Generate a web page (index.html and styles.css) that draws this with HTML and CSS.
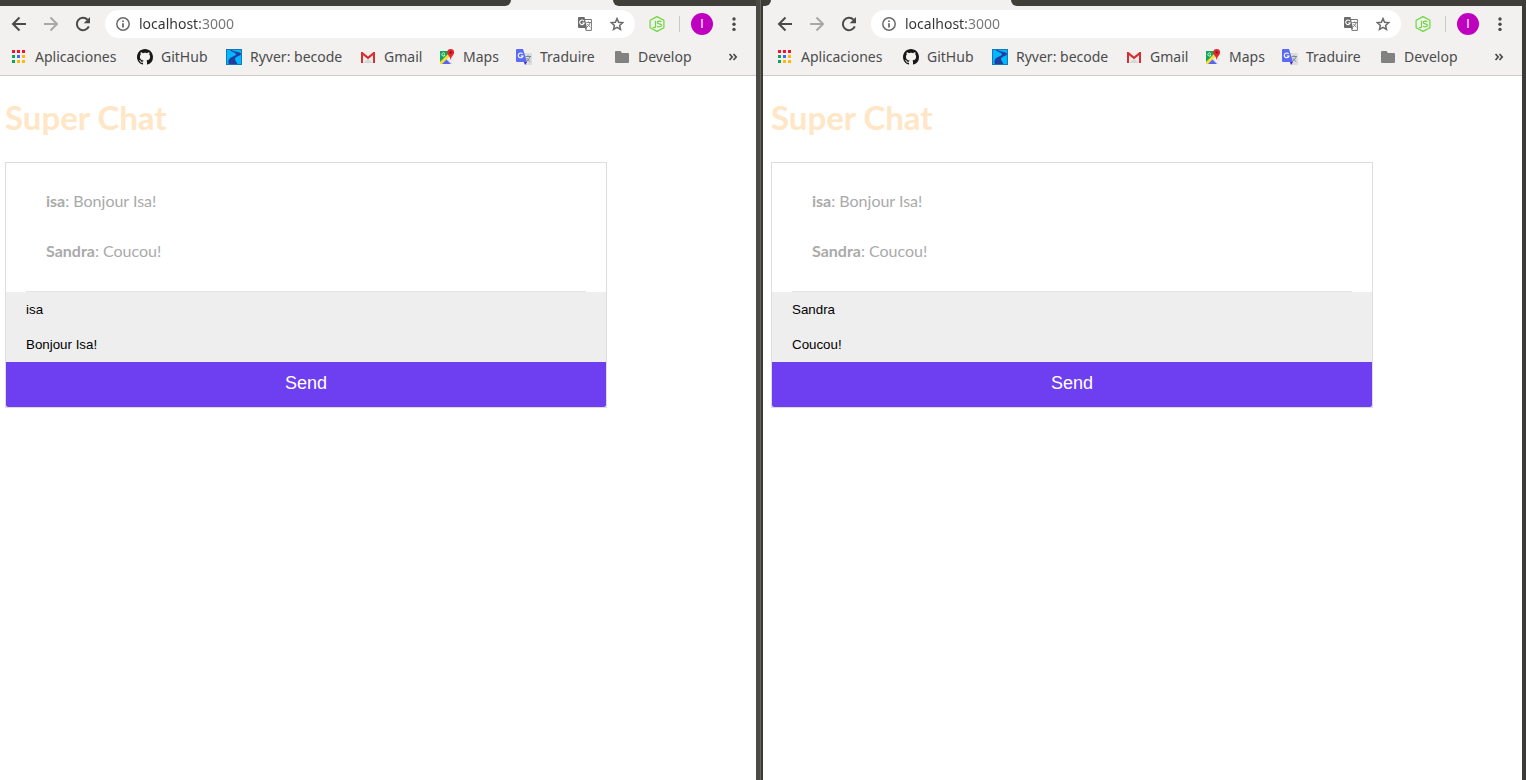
FILE: index.html
```html
<!DOCTYPE html>
<html lang="fr">
<head>
<meta charset="utf-8">
<title>Super Chat</title>
<link rel="stylesheet" href="styles.css">
</head>
<body>
<svg class="sprite" aria-hidden="true">
  <symbol id="back" viewBox="0 0 16 16"><path d="M15 8H2.500M8.500 1.500 2 8l6.500 6.500" fill="none" stroke="currentColor" stroke-width="2"/></symbol>
  <symbol id="forward" viewBox="0 0 16 16"><path d="M1 8h12.500M7.500 1.500 14 8l-6.500 6.500" fill="none" stroke="currentColor" stroke-width="2"/></symbol>
  <symbol id="reload" viewBox="0 0 16 16"><path d="M13.800 10.300A6.200 6.200 0 1 1 12.600 3.800" fill="none" stroke="currentColor" stroke-width="2"/><path d="M15 1v6.300H8.700z" fill="currentColor"/></symbol>
  <symbol id="info" viewBox="0 0 14 14"><circle cx="7" cy="7" r="6.200" fill="none" stroke="currentColor" stroke-width="1.500"/><path d="M6.100 6.200h1.800v4.300H6.100zM6.100 3.500h1.800V5H6.100z" fill="currentColor"/></symbol>
  <symbol id="translate" viewBox="0 0 14 14"><path d="M6 2.500h7.400v10.900H8" fill="#fff" stroke="#757575"/><path d="M1 0h5.500L9 11H1a1 1 0 0 1-1-1V1a1 1 0 0 1 1-1z" fill="#6b6b6b"/><path d="M7 11h2l-1.200 3z" fill="#6b6b6b"/><path d="M8.300 5.500H13M10.500 4.500v1M12 5.500c-.3 2-1.500 3.500-3 4.300M9.200 6.800l3 3.400" fill="none" stroke="#757575" stroke-width=".9"/><path d="M6 4.100A2.300 2.300 0 1 0 6.200 6H4.300" fill="none" stroke="#fff" stroke-width="1.100"/></symbol>
  <symbol id="star" viewBox="0 0 14 14"><path d="M7 1.600 8.600 5.300l4 .4-3 2.700.9 4L7 10.300l-3.500 2.100.9-4-3-2.700 4-.4z" fill="none" stroke="currentColor" stroke-width="1.500"/></symbol>
  <symbol id="node" viewBox="0 0 16 16"><path d="M8 .6 14.900 4.300v7.400L8 15.400l-6.900-3.700V4.300z" fill="none" stroke="#6cd83c" stroke-width="1.200" stroke-linejoin="round"/><path d="M6.500 4.800v5.600c0 1.300-1 1.500-2.700.8M12.300 5.700c-1-.8-4-.8-4 .8 0 1.800 4.200.8 4.200 2.900 0 1.700-3.500 1.700-4.500.7" fill="none" stroke="#6cd83c" stroke-width="1.200"/></symbol>
  <symbol id="dots" viewBox="0 0 4 16"><g fill="currentColor"><circle cx="2" cy="3" r="1.700"/><circle cx="2" cy="8.200" r="1.700"/><circle cx="2" cy="13.400" r="1.700"/></g></symbol>
  <symbol id="apps" viewBox="0 0 16 16"><path d="M1 1h3v3H1zM6 1h3v3H6zM11 1h3v3h-3z" fill="#f8102c"/><path d="M1 6h3v3H1zM1 11h3v3H1z" fill="#0ba853"/><path d="M6 6h3v3H6z" fill="#3d6df5"/><path d="M11 6h3v3h-3zM6 11h3v3H6zM11 11h3v3h-3z" fill="#fdb80a"/></symbol>
  <symbol id="github" viewBox="0 0 16 16"><path fill="#181617" d="M8 0C3.580 0 0 3.580 0 8c0 3.540 2.290 6.530 5.470 7.590.4.070.55-.17.55-.38 0-.19-.01-.82-.01-1.490-2.010.37-2.530-.49-2.690-.94-.09-.23-.48-.94-.82-1.130-.28-.15-.68-.52-.01-.53.63-.01 1.080.58 1.230.82.72 1.210 1.870.87 2.330.66.07-.52.28-.87.51-1.070-1.780-.2-3.640-.89-3.640-3.950 0-.87.31-1.590.82-2.150-.08-.2-.36-1.020.08-2.120 0 0 .67-.21 2.200.82.64-.18 1.320-.27 2-.27s1.360.09 2 .27c1.530-1.040 2.200-.82 2.200-.82.44 1.100.16 1.920.08 2.120.51.56.82 1.270.82 2.150 0 3.070-1.870 3.750-3.650 3.950.29.25.54.73.54 1.480 0 1.070-.01 1.930-.01 2.200 0 .21.15.46.55.38A8.010 8.010 0 0 0 16 8c0-4.420-3.580-8-8-8z"/></symbol>
  <symbol id="ryver" viewBox="0 0 16 16"><rect x=".5" y=".5" width="15" height="15" fill="#00b8ff" stroke="#1576b8"/><path d="M4 1h2c1 2 9 1.500 9 4 0 2-6 2.500-6 5 0 2 2 3 2.500 5H3c-1.500-3 0-5.500 3-7s5-2 3.500-3.500S4.500 2.500 4 1z" fill="#203e9e"/></symbol>
  <symbol id="gmail" viewBox="0 0 16 16"><path d="M1 3h14v11H1z" fill="#efefef"/><path d="m3 14 5-4 5 4z" fill="#d7d7d7"/><path d="M1 3h1.500L8 7.500 13.500 3H15v11h-2V6.200l-5 4-5-4V14H1z" fill="#da2d2d"/></symbol>
  <symbol id="maps" viewBox="0 0 16 16"><path d="M1 2h13v13H1z" fill="#e6e6e6"/><path d="M1 2h9l1 4-9.500 9H1z" fill="#13a65a"/><path d="m1 13 8.500-8.500 2 2L3 15H1z" fill="#ffdd2e"/><path d="m3 15 4.500-4.500L12 15z" fill="#5664ef"/><path d="m9 8.800 5.500 5.500" stroke="#fff" stroke-width="1"/><path d="M5.800 4.700A1.600 1.600 0 1 0 6 6H4.600" fill="none" stroke="#fff" stroke-width=".8"/><path d="M11.700 0a3.400 3.400 0 0 1 3.400 3.400c0 2.500-2.900 3.600-3.200 7.100h-.4c-.3-3.500-3.200-4.600-3.200-7.100A3.400 3.400 0 0 1 11.700 0z" fill="#e9262f"/><circle cx="11.700" cy="3.400" r="1.200" fill="#7e1620"/></symbol>
  <symbol id="gtrans" viewBox="0 0 16 16"><path d="M6 4h9a1 1 0 0 1 1 1v10a1 1 0 0 1-1 1H9z" fill="#dcdcdc"/><path d="M1 0h6l4 13H1a1 1 0 0 1-1-1V1a1 1 0 0 1 1-1z" fill="#5b6cf4"/><path d="M8 13h3l-2 3z" fill="#4a19c9"/><path d="M6.600 4.900A2.400 2.400 0 1 0 7 7H4.700" fill="none" stroke="#fff" stroke-width="1.100"/><path d="M9.500 7.500H15M12 6.300v1.200M14 7.500c-.4 2-1.600 3.500-3.200 4.500M10.500 9l3.500 3.800" fill="none" stroke="#6f8290" stroke-width=".9"/></symbol>
  <symbol id="folder" viewBox="0 0 16 16"><path d="M2 2h4.500L8 4h6a1 1 0 0 1 1 1v8a1 1 0 0 1-1 1H2a1 1 0 0 1-1-1V3a1 1 0 0 1 1-1z" fill="#818181"/></symbol>
  <symbol id="more" viewBox="0 0 10 10"><path d="m1.500 2 2.700 3-2.700 3M5.500 2l2.700 3-2.700 3" fill="none" stroke="currentColor" stroke-width="1.700"/></symbol>
</svg>
<div class="desktop">
  <section class="window window-left" aria-label="isa">
    <div class="tabs"><span class="tabs-before"></span><span class="tabs-after"></span></div>
    <div class="toolbar">
      <button class="tool" aria-label="Atrás"><svg class="icon"><use href="#back"/></svg></button>
      <button class="tool tool-off" aria-label="Adelante"><svg class="icon"><use href="#forward"/></svg></button>
      <button class="tool" aria-label="Recargar"><svg class="icon"><use href="#reload"/></svg></button>
      <div class="omnibox">
        <svg class="icon-small"><use href="#info"/></svg>
        <input class="address" type="text" value="localhost:3000" aria-label="Dirección">
        <button class="tool" aria-label="Traducir"><svg class="icon-small"><use href="#translate"/></svg></button>
        <button class="tool" aria-label="Favorito"><svg class="icon-small"><use href="#star"/></svg></button>
      </div>
      <button class="tool" aria-label="Node"><svg class="icon"><use href="#node"/></svg></button>
      <span class="separator"></span>
      <button class="avatar">I</button>
      <button class="tool menu" aria-label="Menú"><svg class="icon-dots"><use href="#dots"/></svg></button>
    </div>
    <nav class="bookmarks">
      <a class="bookmark" href="#"><svg class="icon"><use href="#apps"/></svg>Aplicaciones</a>
      <a class="bookmark" href="#"><svg class="icon"><use href="#github"/></svg>GitHub</a>
      <a class="bookmark" href="#"><svg class="icon"><use href="#ryver"/></svg>Ryver: becode</a>
      <a class="bookmark" href="#"><svg class="icon"><use href="#gmail"/></svg>Gmail</a>
      <a class="bookmark" href="#"><svg class="icon"><use href="#maps"/></svg>Maps</a>
      <a class="bookmark" href="#"><svg class="icon"><use href="#gtrans"/></svg>Traduire</a>
      <a class="bookmark" href="#"><svg class="icon"><use href="#folder"/></svg>Develop</a>
      <button class="tool" aria-label="Más"><svg class="icon-more"><use href="#more"/></svg></button>
    </nav>
    <main class="page">
      <h1 class="title">Super Chat</h1>
      <form class="chat">
        <div class="messages">
          <p class="message"><strong>isa</strong>: Bonjour Isa!</p>
          <p class="message"><strong>Sandra</strong>: Coucou!</p>
        </div>
        <input class="field" type="text" value="isa" aria-label="Nom">
        <input class="field" type="text" value="Bonjour Isa!" aria-label="Message">
        <button class="send" type="button">Send</button>
      </form>
    </main>
  </section>
  <div class="divider"></div>
  <section class="window window-right" aria-label="Sandra">
    <div class="tabs"><span class="tabs-before"></span><span class="tabs-after"></span></div>
    <div class="toolbar">
      <button class="tool" aria-label="Atrás"><svg class="icon"><use href="#back"/></svg></button>
      <button class="tool tool-off" aria-label="Adelante"><svg class="icon"><use href="#forward"/></svg></button>
      <button class="tool" aria-label="Recargar"><svg class="icon"><use href="#reload"/></svg></button>
      <div class="omnibox">
        <svg class="icon-small"><use href="#info"/></svg>
        <input class="address" type="text" value="localhost:3000" aria-label="Dirección">
        <button class="tool" aria-label="Traducir"><svg class="icon-small"><use href="#translate"/></svg></button>
        <button class="tool" aria-label="Favorito"><svg class="icon-small"><use href="#star"/></svg></button>
      </div>
      <button class="tool" aria-label="Node"><svg class="icon"><use href="#node"/></svg></button>
      <span class="separator"></span>
      <button class="avatar">I</button>
      <button class="tool menu" aria-label="Menú"><svg class="icon-dots"><use href="#dots"/></svg></button>
    </div>
    <nav class="bookmarks">
      <a class="bookmark" href="#"><svg class="icon"><use href="#apps"/></svg>Aplicaciones</a>
      <a class="bookmark" href="#"><svg class="icon"><use href="#github"/></svg>GitHub</a>
      <a class="bookmark" href="#"><svg class="icon"><use href="#ryver"/></svg>Ryver: becode</a>
      <a class="bookmark" href="#"><svg class="icon"><use href="#gmail"/></svg>Gmail</a>
      <a class="bookmark" href="#"><svg class="icon"><use href="#maps"/></svg>Maps</a>
      <a class="bookmark" href="#"><svg class="icon"><use href="#gtrans"/></svg>Traduire</a>
      <a class="bookmark" href="#"><svg class="icon"><use href="#folder"/></svg>Develop</a>
      <button class="tool" aria-label="Más"><svg class="icon-more"><use href="#more"/></svg></button>
    </nav>
    <main class="page">
      <h1 class="title">Super Chat</h1>
      <form class="chat">
        <div class="messages">
          <p class="message"><strong>isa</strong>: Bonjour Isa!</p>
          <p class="message"><strong>Sandra</strong>: Coucou!</p>
        </div>
        <input class="field" type="text" value="Sandra" aria-label="Nom">
        <input class="field" type="text" value="Coucou!" aria-label="Message">
        <button class="send" type="button">Send</button>
      </form>
    </main>
  </section>
</div>
</body>
</html>
```
FILE: styles.css
```css
* { box-sizing: border-box; }
body { margin: 0; background: #fff; }
button, input { margin: 0; padding: 0; border: 0; background: none; }
.sprite { position: absolute; width: 0; height: 0; }

.desktop {
  display: grid;
  grid-template-columns: 756fr 7px 759fr;
  min-height: 100vh;
  border-right: 4px solid #3c3b37;
}
.window { min-width: 0; background: #fff; }
.window-left { --edge: 0px; --tab: 102px; --before: 511px; }
.window-right { --edge: 3px; --tab: 240px; --before: 8px; }
.divider {
  background: linear-gradient(to right, #4b4a42 4px, #66655e 4px 5px, #3c3b37 5px);
}

.tabs { display: flex; gap: var(--tab); height: 6px; background: #f2f1f0; }
.tabs-before { width: var(--before); background: #3f3e38; border-bottom-right-radius: 6px; }
.tabs-after { flex: 1; background: #3f3e38; border-bottom-left-radius: 6px; }

.toolbar {
  display: flex;
  align-items: center;
  gap: 14px;
  height: 36px;
  padding: 0 20px 0 calc(11px + var(--edge));
  background: #f2f1f0;
}
.tool { display: flex; align-items: center; color: #4a4a4a; }
.toolbar > .tool-off { color: #a9a8a7; margin: 0 2px; }
.icon { display: block; flex: none; width: 16px; height: 16px; }
.icon-small { display: block; flex: none; width: 14px; height: 14px; color: #6b6b6b; }
.icon-dots { width: 4px; height: 16px; }
.icon-more { width: 10px; height: 10px; }
.omnibox {
  flex: 1;
  display: flex;
  align-items: center;
  gap: 18px;
  min-width: 0;
  height: 28px;
  padding: 0 11px;
  border-radius: 14px;
  background: #fff;
}
.address {
  flex: 1;
  min-width: 0;
  height: 20px;
  margin-left: -9px;
  font: 14px/20px "Noto Sans", sans-serif;
  color: transparent;
  background: linear-gradient(to right, #333 61px, #757575 61px);
  background-clip: text;
}
.separator { width: 1px; height: 16px; background: #c9c8c7; }
.avatar {
  width: 22px;
  height: 22px;
  margin-left: -3px;
  border-radius: 50%;
  background: #c000bf;
  color: #f3d5f3;
  font: 500 12px/22px Roboto, sans-serif;
}
.menu { margin-left: 5px; }

.bookmarks {
  display: grid;
  grid-template-columns: 126px 89px 134px 79px 77px 98px 1fr auto;
  align-items: center;
  height: 34px;
  padding: 0 18px 4px calc(11px + var(--edge));
  border-bottom: 1px solid #cdcccb;
  background: #f2f1f0;
}
.bookmark {
  display: flex;
  align-items: center;
  gap: 8px;
  font: 14px/20px "Noto Sans", sans-serif;
  color: #4c4c4c;
  text-decoration: none;
  white-space: nowrap;
}

.page { padding: 20px calc(5px + var(--edge)); font-family: Lato, sans-serif; }
.title { margin: 0 0 24px; font-size: 33px; line-height: 42px; color: #ffe6c6; }
.chat {
  max-width: 602px;
  border: 1px solid #ddd;
}
.messages { margin: 0 20px; padding: 13px 20px 15px; border-bottom: 1px solid #e4e4e4; color: #aaa; }
.message { margin: 0; padding: 14px 0; font-size: 16px; line-height: 22px; }
.field {
  display: block;
  width: 100%;
  height: 35px;
  padding: 0 20px;
  background: #eee;
  color: #000;
  font-family: "Liberation Sans", Arial, sans-serif;
}
.send {
  display: block;
  width: 100%;
  padding: 11px 0 13px;
  border-radius: 0 0 2px 2px;
  background: #6e3ef1;
  color: #fff;
  font: 18px/21px "Liberation Sans", Arial, sans-serif;
}
```
